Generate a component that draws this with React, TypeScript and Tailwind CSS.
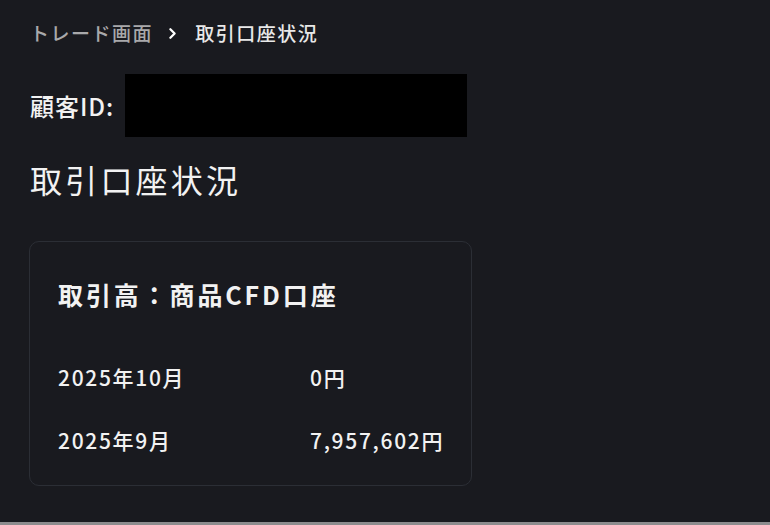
import React from "react";
import { ChevronRight } from "lucide-react";

const font = { fontFamily: '"Noto Sans CJK JP", "Noto Sans", sans-serif' } as const;

export default function App() {
  return (
    <div
      style={font}
      className="w-[770px] h-[525px] bg-[#191a1f] text-[#f2f2f2] flex flex-col overflow-hidden font-medium"
    >
      <div className="flex-1 px-[29px] pt-[21px] flex flex-col">
        <div className="flex items-center h-[24px] text-[19px] leading-[24px] tracking-[0.08em] whitespace-nowrap">
          <span className="text-[#a9a9ab] pl-px">トレード画面</span>
          <ChevronRight className="ml-[11px] mr-[14px] text-white shrink-0" size={17} strokeWidth={3.2} />
          <span className="text-[#e8e8e8]">取引口座状況</span>
        </div>
        <div className="mt-[29px] flex items-center">
          <span className="text-[24px] leading-[32px] tracking-[0.04em] pl-px whitespace-nowrap">顧客ID:</span>
          <div className="ml-[11px] w-[342px] h-[63px] bg-black shrink-0" />
        </div>
        <h1 className="mt-[22px] text-[32px] leading-[40px] tracking-[0.1em] pl-px font-normal whitespace-nowrap">取引口座状況</h1>
        <div className="mt-[42px] w-[443px] h-[245px] border border-[#2b2e35] rounded-[10px] px-[28px] pt-[36px]">
          <div className="text-[25px] leading-[32px] font-bold tracking-[0.115em] whitespace-nowrap">取引高：商品CFD口座</div>
          <div className="mt-[53px] flex text-[21px] leading-[28px] tracking-[0.08em] whitespace-nowrap">
            <span className="w-[252px] shrink-0">2025年10月</span>
            <span>0円</span>
          </div>
          <div className="mt-[35px] flex text-[21px] leading-[28px] tracking-[0.08em] whitespace-nowrap">
            <span className="w-[252px] shrink-0">2025年9月</span>
            <span>7,957,602円</span>
          </div>
        </div>
      </div>
      <div className="h-[3px] bg-[#8c8c8e]" />
    </div>
  );
}
